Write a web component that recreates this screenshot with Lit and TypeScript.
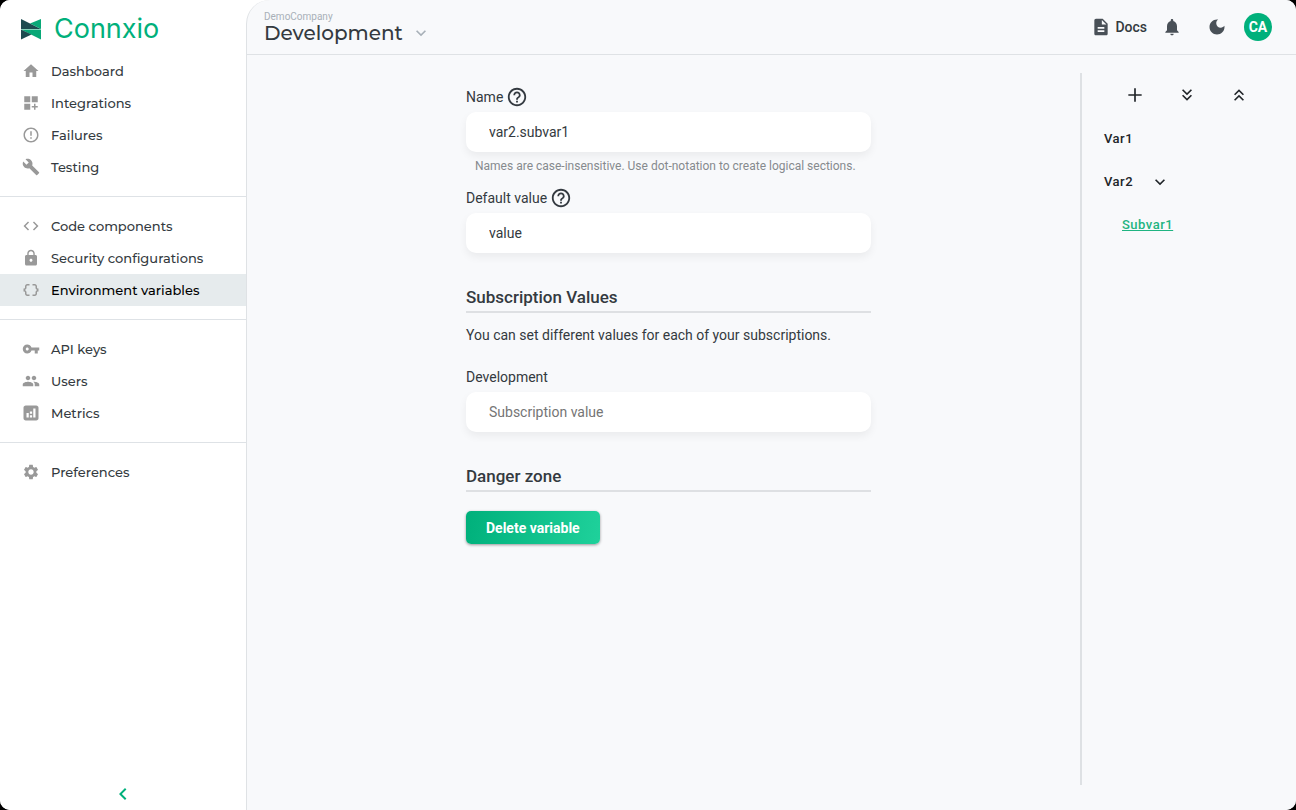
import { LitElement, html, css, svg } from "lit";
import { customElement, property, state } from "lit/decorators.js";
import { classMap } from "lit/directives/class-map.js";

const ICONS: Record<string, string> = {
  home: "M10 20v-6h4v6h5v-8h3L12 3 2 12h3v8z",
  integrations: "M3 3h8v8H3zm10 0h8v8h-8zM3 13h8v8H3zm15 0h-2v3h-3v2h3v3h2v-3h3v-2h-3z",
  failures:
    "M11 15h2v2h-2zm0-8h2v6h-2zm.99-5C6.47 2 2 6.48 2 12s4.47 10 9.99 10C17.52 22 22 17.52 22 12S17.52 2 11.99 2zM12 20c-4.42 0-8-3.58-8-8s3.58-8 8-8 8 3.58 8 8-3.58 8-8 8z",
  build:
    "M22.7 19l-9.1-9.1c.9-2.3.4-5-1.5-6.9-2-2-5-2.4-7.4-1.3L9 6 6 9 1.6 4.7C.4 7.1.9 10.1 2.9 12.1c1.9 1.9 4.6 2.4 6.9 1.5l9.1 9.1c.4.4 1 .4 1.4 0l2.3-2.3c.5-.4.5-1.1.1-1.4z",
  code: "M9.4 16.6L4.8 12l4.6-4.6L8 6l-6 6 6 6 1.4-1.4zm5.2 0l4.6-4.6-4.6-4.6L16 6l6 6-6 6-1.4-1.4z",
  lock: "M18 8h-1V6c0-2.76-2.24-5-5-5S7 3.24 7 6v2H6c-1.1 0-2 .9-2 2v10c0 1.1.9 2 2 2h12c1.1 0 2-.9 2-2V10c0-1.1-.9-2-2-2zm-6 9c-1.1 0-2-.9-2-2s.9-2 2-2 2 .9 2 2-.9 2-2 2zm3.100-9H8.900V6c0-1.710 1.390-3.100 3.100-3.100s3.100 1.390 3.100 3.100v2z",
  braces:
    "M4 7v2c0 .55-.45 1-1 1H2v4h1c.55 0 1 .45 1 1v2c0 1.650 1.350 3 3 3h3v-2H7c-.55 0-1-.45-1-1v-2c0-1.300-.840-2.420-2-2.830v-.340C5.160 11.420 6 10.300 6 9V7c0-.55.45-1 1-1h3V4H7C5.350 4 4 5.350 4 7zM21 10c-.55 0-1-.45-1-1V7c0-1.650-1.350-3-3-3h-3v2h3c.55 0 1 .45 1 1v2c0 1.300.840 2.420 2 2.830v.340c-1.160.410-2 1.520-2 2.830v2c0 .55-.45 1-1 1h-3v2h3c1.650 0 3-1.350 3-3v-2c0-.55.45-1 1-1h1v-4h-1z",
  key: "M12.650 10C11.830 7.670 9.610 6 7 6c-3.310 0-6 2.690-6 6s2.690 6 6 6c2.610 0 4.830-1.670 5.650-4H17v4h4v-4h2v-4H12.650zM7 14c-1.100 0-2-.9-2-2s.9-2 2-2 2 .9 2 2-.9 2-2 2z",
  people:
    "M16 11c1.660 0 2.990-1.340 2.990-3S17.660 5 16 5c-1.660 0-3 1.340-3 3s1.340 3 3 3zm-8 0c1.660 0 2.990-1.340 2.990-3S9.660 5 8 5C6.340 5 5 6.340 5 8s1.340 3 3 3zm0 2c-2.330 0-7 1.170-7 3.500V19h14v-2.500c0-2.330-4.670-3.500-7-3.500zm8 0c-.290 0-.620.020-.970.050 1.160.840 1.970 1.970 1.970 3.450V19h6v-2.500c0-2.330-4.670-3.500-7-3.500z",
  metrics:
    "M19 2H5C3.300 2 2 3.300 2 5v14c0 1.700 1.300 3 3 3h14c1.700 0 3-1.300 3-3V5c0-1.700-1.300-3-3-3zM9 18H6v-6h3v6zm4.500 0h-3v-3h3v3zm0-5h-3v-3h3v3zm4.500 5h-3V6h3v12z",
  settings:
    "M19.140 12.940c.040-.300.060-.610.060-.940 0-.320-.020-.640-.070-.940l2.030-1.580c.180-.140.230-.410.120-.610l-1.920-3.320c-.120-.220-.370-.290-.590-.220l-2.390.960c-.500-.380-1.030-.700-1.620-.940l-.360-2.540c-.040-.240-.240-.410-.480-.410h-3.840c-.240 0-.430.170-.470.410l-.360 2.540c-.590.240-1.130.570-1.620.940l-2.390-.960c-.220-.080-.470 0-.590.220L2.740 8.870c-.120.210-.080.470.120.610l2.030 1.580c-.050.300-.090.630-.090.940s.020.640.070.940l-2.030 1.580c-.180.140-.230.410-.120.610l1.920 3.320c.120.220.370.290.590.220l2.390-.960c.500.380 1.030.700 1.620.940l.360 2.540c.050.240.240.410.480.410h3.840c.240 0 .440-.170.470-.410l.360-2.540c.590-.240 1.130-.560 1.620-.940l2.390.960c.220.080.470 0 .590-.220l1.920-3.320c.120-.220.070-.470-.120-.610l-2.010-1.580zM12 15.600c-1.980 0-3.600-1.620-3.600-3.600s1.620-3.600 3.600-3.600 3.600 1.620 3.600 3.600-1.620 3.600-3.600 3.600z",
  doc: "M14 2H6c-1.100 0-1.990.9-1.990 2L4 20c0 1.100.890 2 1.990 2H18c1.100 0 2-.9 2-2V8l-6-6zm2 16H8v-2h8v2zm0-4H8v-2h8v2zm-3-5V3.500L18.500 9H13z",
  bell: "M12 22c1.100 0 2-.9 2-2h-4c0 1.100.890 2 2 2zm6-6v-5c0-3.070-1.640-5.640-4.500-6.320V4c0-.830-.670-1.500-1.500-1.500s-1.500.670-1.500 1.500v.680C7.630 5.360 6 7.920 6 11v5l-2 2v1h16v-1l-2-2z",
  moon: "M12 3c-4.970 0-9 4.030-9 9s4.030 9 9 9 9-4.030 9-9c0-.460-.040-.920-.100-1.360-.980 1.370-2.580 2.260-4.400 2.260-2.980 0-5.400-2.420-5.400-5.400 0-1.810.890-3.420 2.260-4.400-.440-.060-.900-.100-1.360-.100z",
  help: "M11 18h2v-2h-2v2zm1-16C6.480 2 2 6.480 2 12s4.480 10 10 10 10-4.480 10-10S17.520 2 12 2zm0 18c-4.410 0-8-3.590-8-8s3.590-8 8-8 8 3.590 8 8-3.590 8-8 8zm0-14c-2.210 0-4 1.790-4 4h2c0-1.100.9-2 2-2s2 .9 2 2c0 2-3 1.750-3 5h2c0-2.250 3-2.500 3-5 0-2.210-1.790-4-4-4z",
  plus: "M20 13h-7v7h-2v-7H4v-2h7V4h2v7h7v2z",
  expandAll:
    "M18 6.410L16.590 5 12 9.580 7.410 5 6 6.410l6 6zM18 13l-1.410-1.410L12 16.170l-4.590-4.580L6 13l6 6z",
  collapseAll:
    "M6 17.590L7.410 19 12 14.420 16.590 19 18 17.590l-6-6zM6 11l1.410 1.410L12 7.830l4.590 4.580L18 11l-6-6z",
  down: "M7.410 8.590L12 13.170l4.590-4.580L18 10l-6 6-6-6z",
  left: "M15.410 7.410L14 6l-6 6 6 6 1.410-1.410L10.830 12z",
};

const icon = (name: string, size: number) => html`
  <svg width=${size} height=${size} viewBox="0 0 24 24" fill="currentColor" aria-hidden="true">
    ${svg`<path fill-rule="evenodd" d=${ICONS[name]}></path>`}
  </svg>
`;

const base = css`
  *,
  *::before,
  *::after {
    box-sizing: border-box;
  }
  svg {
    display: block;
    flex: none;
  }
  button {
    font: inherit;
    color: inherit;
    background: none;
    border: 0;
    padding: 0;
    cursor: pointer;
  }
  a {
    color: inherit;
    text-decoration: none;
  }
`;

const NAV = [
  [
    ["home", "Dashboard"],
    ["integrations", "Integrations"],
    ["failures", "Failures"],
    ["build", "Testing"],
  ],
  [
    ["code", "Code components"],
    ["lock", "Security configurations"],
    ["braces", "Environment variables"],
  ],
  [
    ["key", "API keys"],
    ["people", "Users"],
    ["metrics", "Metrics"],
  ],
  [["settings", "Preferences"]],
];

@customElement("app-sidebar")
export class AppSidebar extends LitElement {
  @property() active = "";

  static styles = [
    base,
    css`
      :host {
        display: flex;
        flex-direction: column;
        background: #fff;
        font-family: Montserrat, Inter, sans-serif;
      }
      .brand {
        display: flex;
        align-items: center;
        gap: 12px;
        height: 42px;
        margin: 8px 0 5px 21px;
        color: #00b07b;
        font: 400 27px/40px Inter, sans-serif;
      }
      .group {
        list-style: none;
        margin: 0;
        padding: 13px 0;
        border-bottom: 1px solid #dee2e6;
      }
      .group:first-of-type {
        padding-top: 0;
      }
      .group:last-of-type {
        border-bottom: 0;
      }
      .item {
        display: flex;
        align-items: center;
        gap: 11px;
        height: 32px;
        padding-left: 22px;
        color: #343a40;
        font-size: 13px;
        font-weight: 500;
      }
      .item svg {
        color: #999;
      }
      .active {
        background: #e6ebed;
        color: #000;
      }
      .collapse {
        margin: auto auto 4px;
        color: #00b07b;
      }
    `,
  ];

  render() {
    return html`
      <a class="brand" href="#">
        <svg width="21" height="21" viewBox="0 0 21 21" aria-hidden="true">
          <path fill="#1d4b50" d="M0 0L20 10H0z" />
          <path fill="#08a877" d="M20 0v10L9 4.500z" />
          <path fill="#08a877" d="M0 10.500H20V20.500z" />
          <path fill="#1d4b50" d="M0 10.500L10.500 15.500L0 20.500z" />
        </svg>
        Connxio
      </a>
      ${NAV.map(
        (group) => html`<ul class="group">
          ${group.map(
            ([glyph, label]) => html`<li>
              <a class=${classMap({ item: true, active: label === this.active })} href="#">
                ${icon(glyph, 18)}${label}
              </a>
            </li>`,
          )}
        </ul>`,
      )}
      <button class="collapse" aria-label="Collapse sidebar">${icon("left", 24)}</button>
    `;
  }
}

@customElement("app-header")
export class AppHeader extends LitElement {
  static styles = [
    base,
    css`
      :host {
        display: flex;
        align-items: center;
        justify-content: space-between;
        height: 55px;
        padding: 0 24px 0 17px;
        border-bottom: 1px solid #dfe2e5;
        color: #343a40;
      }
      .switcher {
        display: grid;
        text-align: left;
      }
      .company {
        color: #a8b0b8;
        font-size: 10px;
        line-height: 12px;
      }
      .name {
        display: flex;
        align-items: center;
        gap: 8px;
        font: 500 20px/20px Montserrat, Inter, sans-serif;
      }
      .name svg {
        color: #a8b0b8;
      }
      .tools {
        display: flex;
        align-items: center;
        color: #495057;
      }
      .docs {
        display: flex;
        align-items: center;
        gap: 4px;
        margin-right: 15px;
        color: #343a40;
        font-size: 14px;
        font-weight: 500;
      }
      .docs svg {
        color: #495057;
      }
      .bell {
        margin-right: 25px;
      }
      .moon {
        margin-right: 17px;
      }
      .avatar {
        width: 28px;
        height: 28px;
        border-radius: 50%;
        background: #00b07b;
        color: #fff;
        font-size: 14px;
        font-weight: 700;
      }
    `,
  ];

  render() {
    return html`
      <button class="switcher">
        <span class="company">DemoCompany</span>
        <span class="name">Development ${icon("down", 20)}</span>
      </button>
      <div class="tools">
        <a class="docs" href="#">${icon("doc", 20)}Docs</a>
        <button class="bell" aria-label="Notifications">${icon("bell", 20)}</button>
        <button class="moon" aria-label="Dark mode">${icon("moon", 20)}</button>
        <button class="avatar">CA</button>
      </div>
    `;
  }
}

@customElement("variable-form")
export class VariableForm extends LitElement {
  static styles = [
    base,
    css`
      :host {
        display: block;
        color: #343a40;
        font-size: 14px;
      }
      .label {
        display: flex;
        align-items: center;
        gap: 3px;
        height: 24px;
        margin-bottom: 3px;
      }
      .input {
        display: block;
        width: 100%;
        height: 40px;
        padding: 0 23px;
        border: 0;
        border-radius: 10px;
        background: #fff;
        box-shadow: 0 4px 8px rgba(0, 0, 0, 0.06);
        color: #343a40;
        font: inherit;
      }
      .input::placeholder {
        color: #757575;
        opacity: 1;
      }
      .hint {
        margin: 4px 0 10px 9px;
        color: #868a8e;
        font-size: 12px;
        line-height: 20px;
      }
      .heading {
        margin: 34px 0 0;
        padding-bottom: 4px;
        border-bottom: 2px solid #dee0e3;
        font-size: 17px;
        font-weight: 500;
        line-height: 20px;
      }
      .text {
        margin: 12px 0 20px;
        line-height: 20px;
      }
      .delete {
        height: 33px;
        margin-top: 19px;
        padding: 0 20px;
        border-radius: 5px;
        background: linear-gradient(100deg, #00b07b, #1fd19b);
        box-shadow: 0 1px 3px rgba(0, 0, 0, 0.4);
        color: #fff;
        font-weight: 700;
      }
    `,
  ];

  render() {
    return html`
      <div class="label"><label for="name">Name</label>${icon("help", 22)}</div>
      <input class="input" id="name" value="var2.subvar1" />
      <p class="hint">Names are case-insensitive. Use dot-notation to create logical sections.</p>
      <div class="label"><label for="default">Default value</label>${icon("help", 22)}</div>
      <input class="input" id="default" value="value" />
      <h2 class="heading">Subscription Values</h2>
      <p class="text">You can set different values for each of your subscriptions.</p>
      <div class="label"><label for="development">Development</label></div>
      <input class="input" id="development" placeholder="Subscription value" />
      <h2 class="heading">Danger zone</h2>
      <button class="delete">Delete variable</button>
    `;
  }
}

@customElement("variable-tree")
export class VariableTree extends LitElement {
  @state() private open = true;

  static styles = [
    base,
    css`
      :host {
        display: block;
        padding: 12px 0 0 22px;
        border-left: 2px solid #dee1e4;
        color: #212529;
        font-size: 13px;
        font-weight: 500;
        letter-spacing: 0.5px;
      }
      .tools {
        display: flex;
        gap: 32px;
        margin: 0 0 12px 21px;
      }
      .row {
        display: flex;
        align-items: center;
        gap: 17px;
        height: 43px;
      }
      .child {
        padding-left: 18px;
      }
      .selected {
        color: #1fb481;
        text-decoration: underline;
      }
    `,
  ];

  render() {
    return html`
      <div class="tools">
        <button aria-label="Add variable">${icon("plus", 20)}</button>
        <button aria-label="Expand all" @click=${() => (this.open = true)}>${icon("expandAll", 20)}</button>
        <button aria-label="Collapse all" @click=${() => (this.open = false)}>${icon("collapseAll", 20)}</button>
      </div>
      <div class="row"><a href="#">Var1</a></div>
      <div class="row">
        <a href="#">Var2</a>
        <button aria-label="Toggle Var2" @click=${() => (this.open = !this.open)}>${icon("down", 20)}</button>
      </div>
      ${this.open ? html`<div class="row child"><a class="selected" href="#">Subvar1</a></div>` : ""}
    `;
  }
}

@customElement("app-root")
export class AppRoot extends LitElement {
  static styles = [
    base,
    css`
      :host {
        display: block;
        background: #000;
        font-family: Roboto, sans-serif;
      }
      .window {
        display: grid;
        grid-template-columns: 246px 1fr;
        min-height: 100vh;
        overflow: hidden;
        border-radius: 10px;
        background: #fff;
      }
      .page {
        display: flex;
        flex-direction: column;
        border-left: 1px solid #dfe2e5;
        border-top-left-radius: 24px;
        background: #f8f9fb;
      }
      .body {
        flex: 1;
        display: grid;
        grid-template-columns: 1fr 196px;
        padding: 18px 20px 25px 10px;
      }
      .form {
        width: 100%;
        max-width: 405px;
        margin: 12px auto 0;
      }
    `,
  ];

  render() {
    return html`
      <div class="window">
        <app-sidebar active="Environment variables"></app-sidebar>
        <div class="page">
          <app-header></app-header>
          <main class="body">
            <variable-form class="form"></variable-form>
            <variable-tree></variable-tree>
          </main>
        </div>
      </div>
    `;
  }
}
